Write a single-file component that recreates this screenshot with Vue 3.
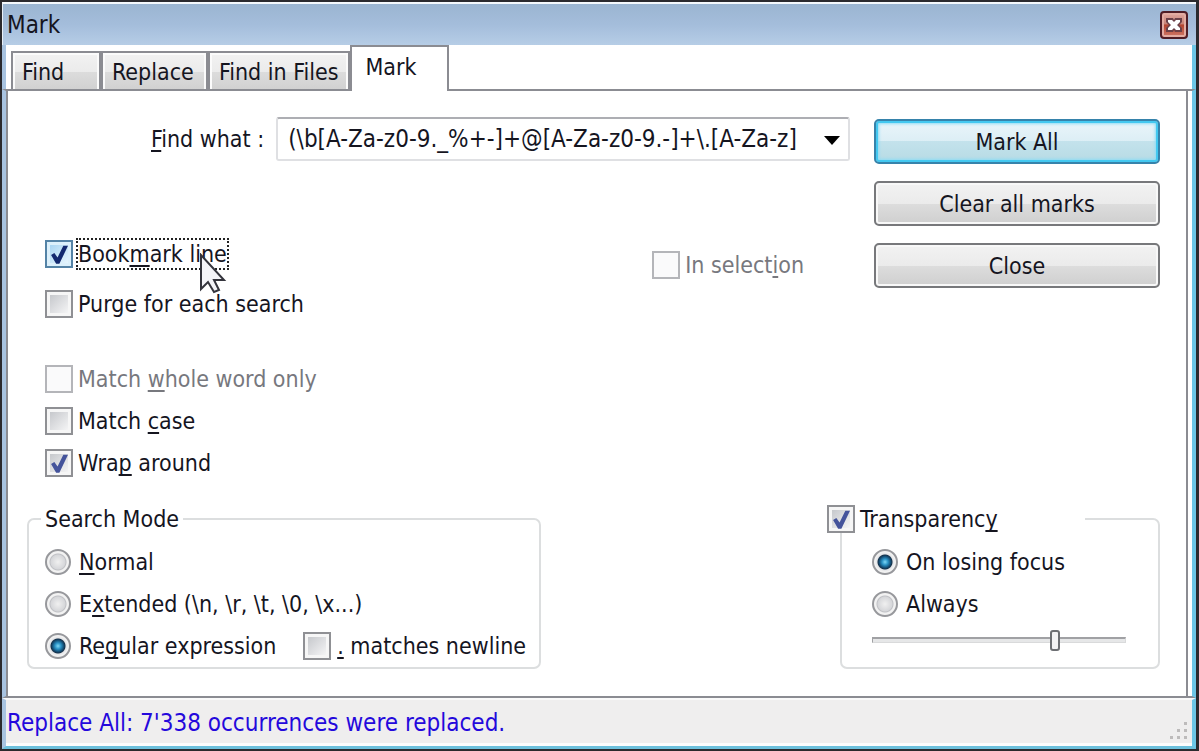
<script setup>
import { ref } from 'vue'

const tabs = ['Find', 'Replace', 'Find in Files', 'Mark']
const active = ref('Mark')
const pattern = ref('(\\b[A-Za-z0-9._%+-]+@[A-Za-z0-9.-]+\\.[A-Za-z]')
const bookmark = ref(true)
const purge = ref(false)
const wholeWord = ref(false)
const matchCase = ref(false)
const wrap = ref(true)
const inSelection = ref(false)
const mode = ref('regex')
const dotNewline = ref(false)
const transparency = ref(true)
const transparencyMode = ref('focus')
const opacity = ref(73)
</script>

<template>
  <main class="window">
    <header class="titlebar">
      <h1 class="title">Mark</h1>
      <button class="close" type="button" aria-label="Close window">
        <svg viewBox="0 0 16 14" width="16" height="14" aria-hidden="true">
          <path d="M0 0h7l1 2 1-2h7v4l-3 3 3 3v4H9l-1-2-1 2H0v-4l3-3-3-3z" fill="#6b4048" />
          <path d="M2 2h4l2 2 2-2h4v2l-3 3 3 3v2h-4l-2-2-2 2H2v-2l3-3-3-3z" fill="#fff" />
        </svg>
      </button>
    </header>

    <nav class="tabs" role="tablist">
      <button
        v-for="tab in tabs"
        :key="tab"
        type="button"
        role="tab"
        class="tab"
        :class="{ active: tab === active }"
        :aria-selected="tab === active"
        @click="active = tab"
      >{{ tab }}</button>
    </nav>

    <section class="panel">
      <div class="upper">
        <div class="main">
          <div class="search">
            <label for="pattern"><u>F</u>ind what :</label>
            <div class="combo">
              <input id="pattern" v-model="pattern" type="text" spellcheck="false" />
              <button type="button" aria-label="Search history">
                <svg viewBox="0 0 16 9" width="16" height="9" aria-hidden="true">
                  <path d="M0 0h16L8 9z" fill="#000" />
                </svg>
              </button>
            </div>
          </div>

          <div class="options">
            <div class="stacks">
              <div class="stack first">
                <label class="choice hot">
                  <input v-model="bookmark" type="checkbox" />
                  <span class="focused">Book<u>m</u>ark line</span>
                  <svg class="cursor" viewBox="0 0 28 42" width="28" height="42" aria-hidden="true">
                    <path d="M2 2v34l7-7 6 10 5-2-5-10h10z" fill="#f4f4f8" stroke="#34343c" stroke-width="2" />
                  </svg>
                </label>
                <label class="choice">
                  <input v-model="purge" type="checkbox" />
                  <span>Purge for each search</span>
                </label>
              </div>
              <div class="stack second">
                <label class="choice off">
                  <input v-model="wholeWord" type="checkbox" disabled />
                  <span>Match <u>w</u>hole word only</span>
                </label>
                <label class="choice">
                  <input v-model="matchCase" type="checkbox" />
                  <span>Match <u>c</u>ase</span>
                </label>
                <label class="choice">
                  <input v-model="wrap" type="checkbox" />
                  <span>Wra<u>p</u> around</span>
                </label>
              </div>
            </div>
            <label class="choice off selection">
              <input v-model="inSelection" type="checkbox" disabled />
              <span>In select<u>i</u>on</span>
            </label>
          </div>
        </div>

        <div class="actions">
          <button type="button" class="push default">Mark All</button>
          <button type="button" class="push">Clear all marks</button>
          <button type="button" class="push">Close</button>
        </div>
      </div>

      <div class="lower">
        <fieldset class="group mode">
          <legend>Search Mode</legend>
          <div class="rows">
            <label class="choice">
              <input v-model="mode" type="radio" name="mode" value="normal" />
              <span><u>N</u>ormal</span>
            </label>
            <label class="choice">
              <input v-model="mode" type="radio" name="mode" value="extended" />
              <span>E<u>x</u>tended (\n, \r, \t, \0, \x...)</span>
            </label>
            <div class="pair">
              <label class="choice">
                <input v-model="mode" type="radio" name="mode" value="regex" />
                <span>Re<u>g</u>ular expression</span>
              </label>
              <label class="choice">
                <input v-model="dotNewline" type="checkbox" />
                <span><u>.</u> matches newline</span>
              </label>
            </div>
          </div>
        </fieldset>

        <fieldset class="group transparency">
          <legend>
            <label class="choice">
              <input v-model="transparency" type="checkbox" />
              <span>Transparenc<u>y</u></span>
            </label>
          </legend>
          <div class="rows">
            <label class="choice">
              <input v-model="transparencyMode" type="radio" name="transparency" value="focus" />
              <span>On losing focus</span>
            </label>
            <label class="choice">
              <input v-model="transparencyMode" type="radio" name="transparency" value="always" />
              <span>Always</span>
            </label>
            <input v-model="opacity" class="slider" type="range" min="0" max="100" aria-label="Opacity" />
          </div>
        </fieldset>
      </div>
    </section>

    <footer class="status">
      <output>Replace All: 7'338 occurrences were replaced.</output>
      <svg class="grip" viewBox="0 0 18 18" width="18" height="18" aria-hidden="true">
        <path d="M14 0h3v3h-3zM7 7h3v3H7zM14 7h3v3h-3zM0 14h3v3H0zM7 14h3v3H7zM14 14h3v3h-3z" fill="#bdbbbb" />
      </svg>
    </footer>
  </main>
</template>

<style>
body {
  background: #2b2a2e;
}
</style>

<style scoped>
* {
  box-sizing: border-box;
}

.window {
  display: flex;
  flex-direction: column;
  min-height: 100vh;
  padding: 2px 3px 3px 2px;
  background: #2b2a2e;
  color: #15151f;
  font: 23px/28px "DejaVu Sans Condensed", "Noto Sans", sans-serif;
}

button,
input {
  margin: 0;
  color: inherit;
  font: inherit;
}

u {
  text-decoration: underline 2px;
  text-underline-offset: 3px;
  text-decoration-skip-ink: none;
}

.titlebar {
  display: flex;
  align-items: center;
  justify-content: space-between;
  height: 43px;
  padding: 0 8px 0 4px;
  border-top: 2px solid #f4f8fc;
  border-left: 1px solid #e8f0f8;
  background: linear-gradient(#9bb5d1, #a4bddb 50%, #b6cde6);
}

.title {
  margin: 0;
  font-size: 24px;
  font-weight: normal;
}

.close {
  display: grid;
  place-items: center;
  width: 28px;
  height: 28px;
  padding: 0;
  border: 2px solid #4f1d26;
  border-radius: 4px;
  background: linear-gradient(#e0a79f, #c98478 45%, #b3432f 50%, #cf7a6a);
  box-shadow: inset 0 0 0 2px #e3aca2;
}

.tabs {
  display: flex;
  align-items: flex-end;
  height: 46px;
  padding-left: 5px;
  margin-bottom: -2px;
}

.tabs,
.panel,
.status {
  border-left: 4px solid #a8c3e0;
  border-right: 4px solid #6cc6e6;
  background-color: #fff;
}

.tab {
  height: 40px;
  padding: 0 9px;
  border: 2px solid #8b8c92;
  border-bottom: 0;
  background: linear-gradient(#f2f2f2, #ebebeb 50%, #dcdcdc 50%, #d0d0d0);
  box-shadow: inset 2px 2px #fbfbfb, inset -2px 0 #fbfbfb;
  text-align: left;
}

.tab:first-child {
  min-width: 90px;
}

.tab:nth-child(2) {
  min-width: 107px;
}

.tab.active {
  position: relative;
  z-index: 1;
  min-width: 99px;
  height: 46px;
  padding: 0 14px 4px;
  background: #fff;
  box-shadow: none;
}

.panel {
  flex: 1;
  display: flex;
  flex-direction: column;
  justify-content: space-between;
  gap: 28px;
  padding: 28px 32px 27px 21px;
  background:
    linear-gradient(#8b8c92, #8b8c92) 0 0 / 2px 100% no-repeat,
    linear-gradient(#8b8c92, #8b8c92) right 4px top 0 / 2px 100% no-repeat,
    #fff;
  position: relative;
  border-top: 2px solid #8b8c92;
  border-bottom: 2px solid #8b8c92;
}

.upper {
  display: flex;
  gap: 24px;
}

.main {
  flex: 1;
  min-width: 0;
}

.search {
  display: flex;
  align-items: center;
  gap: 12px;
  padding-left: 124px;
  margin-top: -2px;
}

.search label {
  white-space: nowrap;
}

.combo {
  flex: 1;
  display: flex;
  min-width: 0;
  height: 44px;
  border: 2px solid #dfe0e3;
  border-top-color: #adaeb3;
  border-radius: 3px;
  background: #fff;
}

.combo input {
  flex: 1;
  min-width: 0;
  padding: 0 0 0 10px;
  border: 0;
  outline: 0;
  background: none;
  font-size: 24px;
}

.combo button {
  width: 32px;
  padding: 2px 0 0;
  border: 0;
  background: none;
  line-height: 0;
}

.options {
  display: flex;
  justify-content: space-between;
  align-items: flex-start;
  padding: 79px 46px 0 18px;
}

.stack {
  display: flex;
  flex-direction: column;
  align-items: flex-start;
}

.first {
  gap: 22px;
}

.second {
  gap: 14px;
  margin-top: 47px;
}

.selection {
  margin-top: 11px;
}

.choice {
  position: relative;
  display: flex;
  align-items: center;
  gap: 5px;
  height: 28px;
  white-space: nowrap;
}

.choice.off {
  color: #77787e;
}

.focused {
  outline: 2px dotted #222;
}

.cursor {
  position: absolute;
  left: 154px;
  top: 13px;
}

input[type='checkbox'] {
  appearance: none;
  display: grid;
  place-items: center;
  width: 28px;
  height: 28px;
  border: 2px solid #8f9094;
  background: linear-gradient(135deg, #c6c8cc, #f4f4f5) content-box, #f6f6f6;
  padding: 3px;
}

input[type='checkbox']:disabled {
  border-color: #b4b5b9;
  background: #fafafb;
}

.hot input[type='checkbox'] {
  border-color: #5483a6;
  background: linear-gradient(135deg, #a9d5f2, #e6f5fd) content-box, #dcf0fb;
}

input[type='checkbox']:checked::before {
  content: '';
  width: 18px;
  height: 20px;
  background: #44539b;
  clip-path: polygon(6% 50%, 24% 40%, 42% 62%, 74% 4%, 100% 4%, 52% 94%, 34% 94%);
}

.hot input[type='checkbox']:checked::before {
  background: #13296f;
}

input[type='radio'] {
  appearance: none;
  width: 26px;
  height: 26px;
  border: 2px solid #97989c;
  border-radius: 50%;
  background: radial-gradient(circle, #f0f0f0 0, #d6d7da 7px, #c0c1c5 8px, #f2f2f2 9px);
}

input[type='radio']:checked {
  background: radial-gradient(circle, #7fd8f6 0, #2a93c6 3px, #12476d 6px, #17324a 7px, #e4e5e8 8px, #f2f2f2 10px);
}

.rows .choice {
  gap: 8px;
}

.actions {
  display: flex;
  flex-direction: column;
  gap: 17px;
  width: 286px;
}

.push {
  height: 45px;
  padding: 0;
  border: 2px solid #77787b;
  border-radius: 5px;
  background: linear-gradient(#f2f2f2, #ebebeb 50%, #dddddd 50%, #cfcfcf);
  box-shadow: inset 0 0 0 2px #f8f8f8;
}

.push.default {
  border-color: #3683ab;
  background: linear-gradient(#eaf5fa, #dceef5 50%, #c3e2ec 50%, #b7dbe4);
  box-shadow: inset 0 0 0 2px #43c8f0, inset 0 0 3px 3px #8fdcf4;
}

.lower {
  display: flex;
  justify-content: space-between;
  align-items: stretch;
}

.group {
  min-width: 0;
  margin: 0;
  border: 2px solid #dcdedf;
  border-radius: 7px;
}

.mode {
  width: 514px;
  padding: 0 13px 7px 16px;
}

.mode legend {
  margin-left: -4px;
  padding: 0 4px;
}

.transparency {
  width: 320px;
  padding: 0 32px 7px 30px;
}

.transparency legend {
  width: 258px;
  margin-left: -45px;
  padding: 0;
}

.rows {
  display: flex;
  flex-direction: column;
  gap: 14px;
  padding-top: 15px;
}

.pair {
  display: flex;
  justify-content: space-between;
}

.pair .choice:last-child {
  gap: 6px;
}

.slider {
  appearance: none;
  width: 100%;
  height: 16px;
  background: none;
}

.slider::-webkit-slider-runnable-track {
  height: 6px;
  border: 1px solid #d9dadb;
  border-top: 2px solid #a0a1a4;
  border-left-color: #a0a1a4;
  background: #e6e7e8;
}

.slider::-webkit-slider-thumb {
  appearance: none;
  width: 10px;
  height: 21px;
  margin-top: -9px;
  border: 2px solid #6d6f73;
  border-radius: 3px;
  background: #f2f2f3;
}

.status {
  display: flex;
  align-items: center;
  justify-content: space-between;
  height: 51px;
  padding-left: 1px;
  border-top: 2px solid #fafafa;
  border-bottom: 3px solid #6cc0dc;
  background-color: #efeeee;
  box-shadow: inset 0 -3px #fcfcfc;
  color: #2408dc;
  font-size: 24px;
}

.grip {
  align-self: flex-end;
  margin: 0 4px 6px 0;
}
</style>
